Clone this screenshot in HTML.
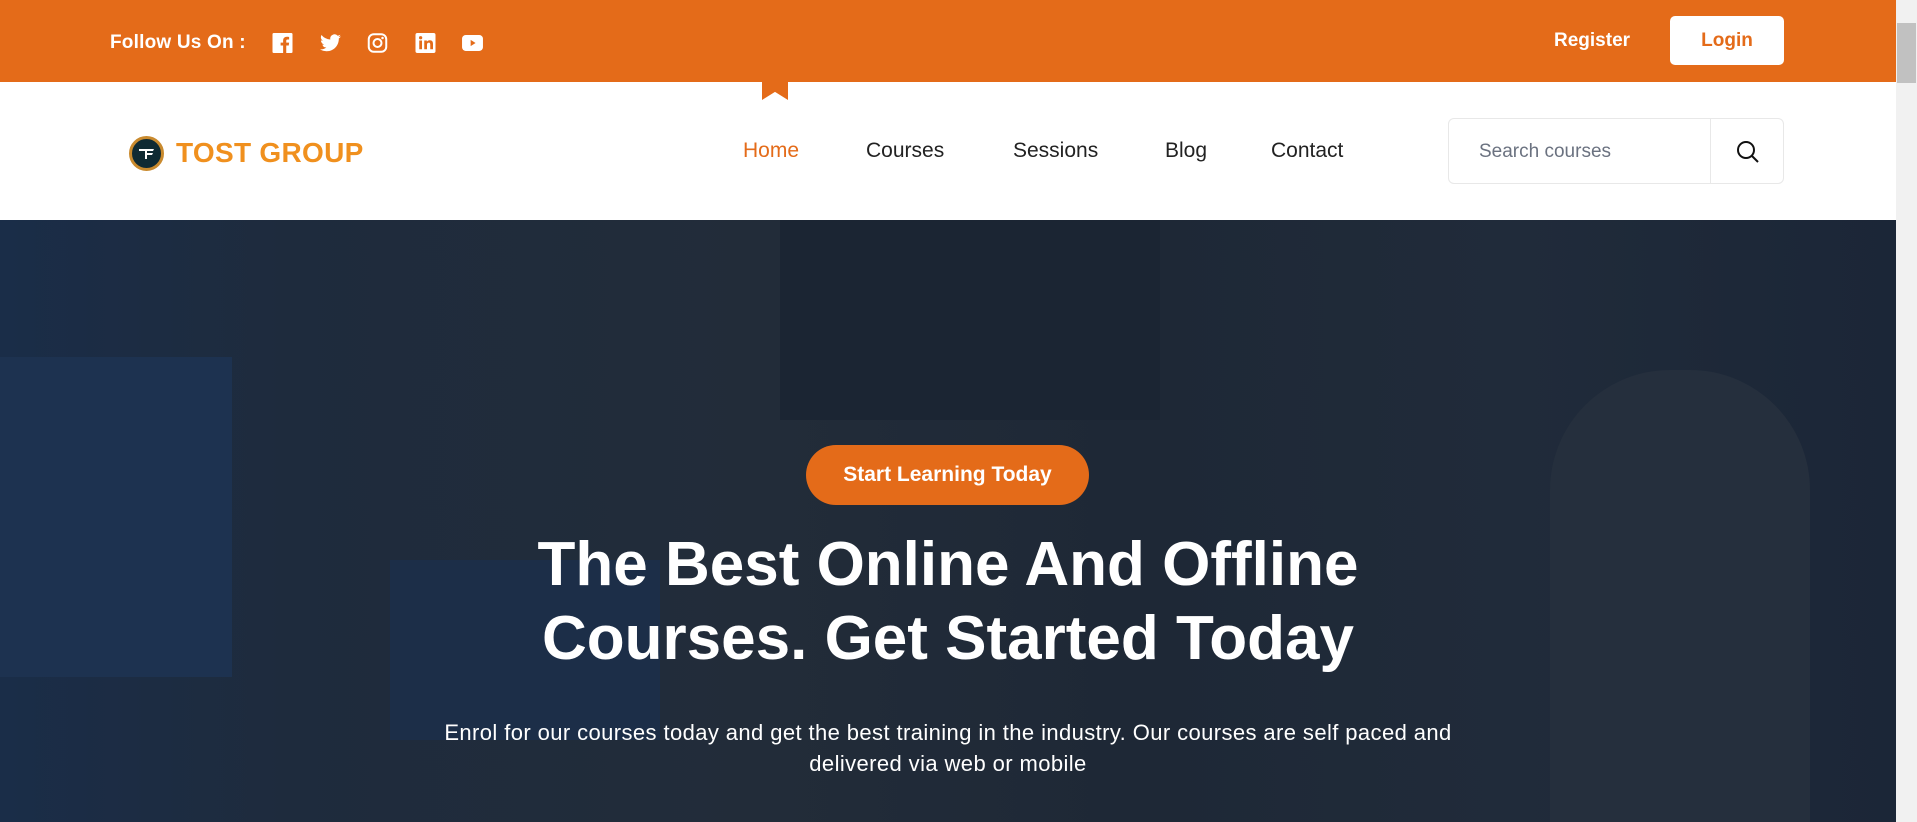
<!DOCTYPE html>
<html><head><meta charset="utf-8"><style>
*{margin:0;padding:0;box-sizing:border-box}
body{width:1917px;height:822px;overflow:hidden;font-family:"Liberation Sans",sans-serif;position:relative;background:#fff}
.top{position:absolute;left:0;top:0;width:1896px;height:82px;background:#e46b19}
.follow{position:absolute;left:110px;top:32px;color:#fff;font-weight:bold;font-size:19px;letter-spacing:0.2px}
.ic{position:absolute;top:33px;width:21px;height:20px}
.reg{position:absolute;left:1554px;top:30px;color:#fff;font-size:19px;font-weight:bold}
.login{position:absolute;left:1670px;top:16px;width:114px;height:49px;background:#fff;border-radius:5px;color:#e46b19;font-size:19px;font-weight:bold;text-align:center;line-height:49px}
.notch{position:absolute;left:762px;top:82px;width:26px;height:18px;background:#e46b19;clip-path:polygon(0 0,100% 0,100% 100%,50% 55%,0 100%)}
.logo{position:absolute;left:129px;top:136px;width:35px;height:35px;border-radius:50%;background:#0f2a33;border:3px solid #c98a2e}
.brand{position:absolute;left:176px;top:137px;color:#f0901e;font-size:28px;font-weight:bold;letter-spacing:0.3px}
.nav{position:absolute;top:139px;font-size:21px;color:#222}
.search{position:absolute;left:1448px;top:118px;width:336px;height:66px;border:1px solid #e8e8e8;border-radius:6px}
.search span{position:absolute;left:30px;top:22px;font-size:19px;color:#6b7280}
.search .div{position:absolute;left:261px;top:0;width:1px;height:64px;background:#e8e8e8}
.hero{position:absolute;left:0;top:220px;width:1896px;height:602px;background:linear-gradient(90deg,#1a2d48 0%,#1e2b3d 15%,#222c39 40%,#1e2836 60%,#202b3a 80%,#1b2637 100%);overflow:hidden}
.blk{position:absolute}
.scroll{position:absolute;left:1896px;top:0;width:21px;height:822px;background:#f1f1f1}
.thumb{position:absolute;left:1897px;top:23px;width:19px;height:60px;background:#c1c1c1}
.btn{position:absolute;left:806px;top:445px;width:283px;height:60px;border-radius:30px;background:#e46b19;color:#fff;font-size:21px;font-weight:bold;text-align:center;line-height:60px}
h1{position:absolute;left:0;width:1896px;top:528px;text-align:center;color:#fff;font-size:62px;line-height:74px;font-weight:bold}
p{position:absolute;left:0;width:1896px;top:717px;text-align:center;color:#fff;font-size:22px;line-height:31px;letter-spacing:0.4px}
</style></head><body>
<div class="top"></div>
<div class="follow">Follow Us On :</div>
<svg class="ic" style="left:272px" viewBox="0 0 16 16"><rect width="16" height="16" rx="1" fill="#fff"/><path d="M11 16V10h2l.3-2.3H11V6.3c0-.7.2-1.1 1.1-1.1h1.2V3.1c-.2 0-.9-.1-1.8-.1-1.8 0-3 1.1-3 3.1V7.7H6.5V10h2v6z" fill="#e46b19"/></svg>
<svg class="ic" style="left:320px" viewBox="0 0 24 20"><path d="M24 2.4a10 10 0 0 1-2.8.8A4.9 4.9 0 0 0 23.3.5a9.8 9.8 0 0 1-3.1 1.2A4.9 4.9 0 0 0 11.8 6 14 14 0 0 1 1.7.9a4.9 4.9 0 0 0 1.5 6.6A4.9 4.9 0 0 1 1 6.9a4.9 4.9 0 0 0 3.9 4.8 4.9 4.9 0 0 1-2.2.1 4.9 4.9 0 0 0 4.6 3.4A9.9 9.9 0 0 1 0 17.2 14 14 0 0 0 7.5 19.4c9.1 0 14-7.5 14-14v-.6A10 10 0 0 0 24 2.4z" fill="#fff"/></svg>
<svg class="ic" style="left:367px" viewBox="0 0 16 16"><rect x="1" y="1" width="14" height="14" rx="4" fill="none" stroke="#fff" stroke-width="1.6"/><circle cx="8" cy="8" r="3.2" fill="none" stroke="#fff" stroke-width="1.6"/><circle cx="12" cy="4" r="1" fill="#fff"/></svg>
<svg class="ic" style="left:415px" viewBox="0 0 16 16"><rect width="16" height="16" rx="1.5" fill="#fff"/><rect x="3" y="6" width="2.2" height="7" fill="#e46b19"/><circle cx="4.1" cy="3.8" r="1.3" fill="#e46b19"/><path d="M7 6h2.1v1c.4-.7 1.3-1.2 2.3-1.2 2 0 2.6 1.2 2.6 3.1V13h-2.2V9.3c0-.9-.2-1.600-1.100-1.600s-1.500.6-1.500 1.600V13H7z" fill="#e46b19"/></svg>
<svg class="ic" style="left:462px;top:35px;height:16px" viewBox="0 0 17 13"><rect width="17" height="13" rx="3" fill="#fff"/><path d="M7 4v5l4-2.5z" fill="#e46b19"/></svg>
<div class="reg">Register</div>
<div class="login">Login</div>
<div class="notch"></div>
<div class="logo"><svg width="29" height="29" viewBox="0 0 29 29"><path d="M7 10h15l-1 2h-6v8h-2v-8H7z M15 14h6l-1 2h-5z" fill="#fff"/></svg></div>
<div class="brand">TOST GROUP</div>
<div class="nav" style="left:743px;color:#e46b19">Home</div>
<div class="nav" style="left:866px">Courses</div>
<div class="nav" style="left:1013px">Sessions</div>
<div class="nav" style="left:1165px">Blog</div>
<div class="nav" style="left:1271px">Contact</div>
<div class="search"><span>Search courses</span><div class="div"></div>
<svg style="position:absolute;left:286px;top:20px" width="26" height="26" viewBox="0 0 26 26"><circle cx="11" cy="11" r="8" fill="none" stroke="#111" stroke-width="2"/><path d="M17 17l6 6" stroke="#111" stroke-width="2"/></svg></div>
<div class="hero">
<div class="blk" style="left:0;top:137px;width:232px;height:320px;background:#1d3250"></div>
<div class="blk" style="left:390px;top:340px;width:270px;height:180px;background:#1c2e48"></div>
<div class="blk" style="left:780px;top:0;width:380px;height:200px;background:#1b2533"></div>
<div class="blk" style="left:1550px;top:150px;width:260px;height:452px;background:#252f3d;border-radius:120px 120px 0 0"></div>
</div>
<div class="btn">Start Learning Today</div>
<h1>The Best Online And Offline<br>Courses. Get Started Today</h1>
<p>Enrol for our courses today and get the best training in the industry. Our courses are self paced and<br>delivered via web or mobile</p>
<div class="scroll"></div><div class="thumb"></div>
</body></html>
